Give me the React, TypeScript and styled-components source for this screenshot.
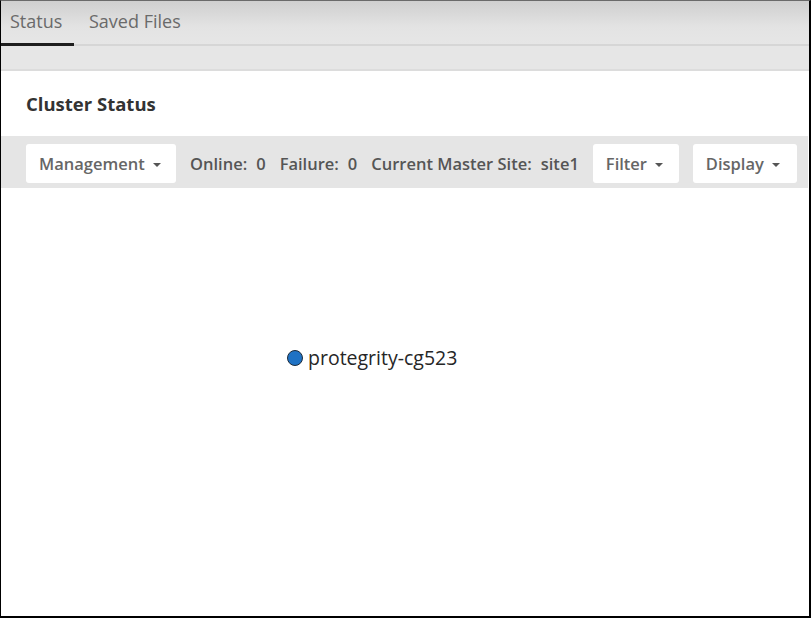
import { createGlobalStyle, styled } from 'styled-components';

const Global = createGlobalStyle`
  html, body {
    margin: 0;
    padding: 0;
    background: #fff;
  }
  body {
    font-family: "Open Sans", "Noto Sans", sans-serif;
  }
`;

const Frame = styled.div`
  box-sizing: border-box;
  width: 811px;
  height: 618px;
  border: 2px solid #000;
  border-top: 1px solid #6a6a6a;
  border-left-width: 1px;
  display: flex;
  flex-direction: column;
  background: #fff;
  overflow: hidden;
`;

const TabBar = styled.div`
  height: 43px;
  display: flex;
  align-items: stretch;
  background: linear-gradient(#cfcfcf, #e3e3e3 60%, #e6e6e6);
  border-bottom: 2px solid #d6d6d6;
`;

const Tab = styled.div<{ active?: boolean }>`
  display: flex;
  align-items: center;
  padding: 0 12px 6px 9px;
  font-size: 18px;
  color: #6a6a6a;
  box-shadow: ${p => (p.active ? 'inset 0 -3px 0 #1e1e1e' : 'none')};
  margin-bottom: -2px;
  &:first-child {
    width: 52px;
  }
  &:not(:first-child) {
    padding-left: 15px;
  }
`;

const Strip = styled.div`
  height: 23px;
  background: #e6e6e6;
  border-bottom: 2px solid #dcdcdc;
`;

const Title = styled.h2`
  margin: 0;
  padding: 20px 25px 0;
  height: 45px;
  box-sizing: border-box;
  font-size: 18.5px;
  font-weight: 700;
  color: #333;
  line-height: 26px;
`;

const Toolbar = styled.div`
  margin-top: 20px;
  height: 52px;
  background: #e5e5e5;
  display: flex;
  align-items: center;
  padding: 0 0 0 25px;
  gap: 14px;
  margin-right: 1px;
`;

const DropButton = styled.div<{ w: number }>`
  box-sizing: border-box;
  width: ${p => p.w}px;
  height: 39px;
  margin-top: 3px;
  background: #fff;
  border-radius: 3px;
  display: flex;
  align-items: center;
  padding-left: 13px;
  gap: 8px;
  font-size: 16.5px;
  font-weight: 600;
  color: #666;
`;

const Caret = styled.span`
  width: 0;
  height: 0;
  border-left: 4.5px solid transparent;
  border-right: 4.5px solid transparent;
  border-top: 4.5px solid #555;
  margin-top: 2px;
`;

const Stat = styled.span`
  display: flex;
  gap: 9px;
  font-size: 16.5px;
  font-weight: 600;
  color: #555;
  white-space: pre;
  margin-top: 2px;
`;

const Canvas = styled.div`
  position: relative;
  flex: 1;
`;

const Node = styled.div<{ x: number; y: number }>`
  position: absolute;
  left: ${p => p.x}px;
  top: ${p => p.y}px;
  display: flex;
  align-items: center;
  gap: 5px;
  font-size: 19.5px;
  color: #262626;
`;

const Dot = styled.span`
  width: 14px;
  height: 14px;
  border-radius: 50%;
  background: #1f72c4;
  border: 1.5px solid #1d2b3a;
`;

const stats = [
  { label: 'Online:', value: '0' },
  { label: 'Failure:', value: '0' },
  { label: 'Current Master Site:', value: 'site1' },
];

export default function App() {
  return (
    <>
      <Global />
      <Frame>
        <TabBar>
          <Tab active>Status</Tab>
          <Tab>Saved Files</Tab>
        </TabBar>
        <Strip />
        <Title>Cluster Status</Title>
        <Toolbar>
          <DropButton w={150}>
            Management <Caret />
          </DropButton>
          {stats.map(s => (
            <Stat key={s.label}>
              <span>{s.label}</span>
              <span>{s.value}</span>
            </Stat>
          ))}
          <DropButton w={86}>
            Filter <Caret />
          </DropButton>
          <DropButton w={104}>
            Display <Caret />
          </DropButton>
        </Toolbar>
        <Canvas>
          <Node x={286} y={156}>
            <Dot />
            protegrity-cg523
          </Node>
        </Canvas>
      </Frame>
    </>
  );
}
